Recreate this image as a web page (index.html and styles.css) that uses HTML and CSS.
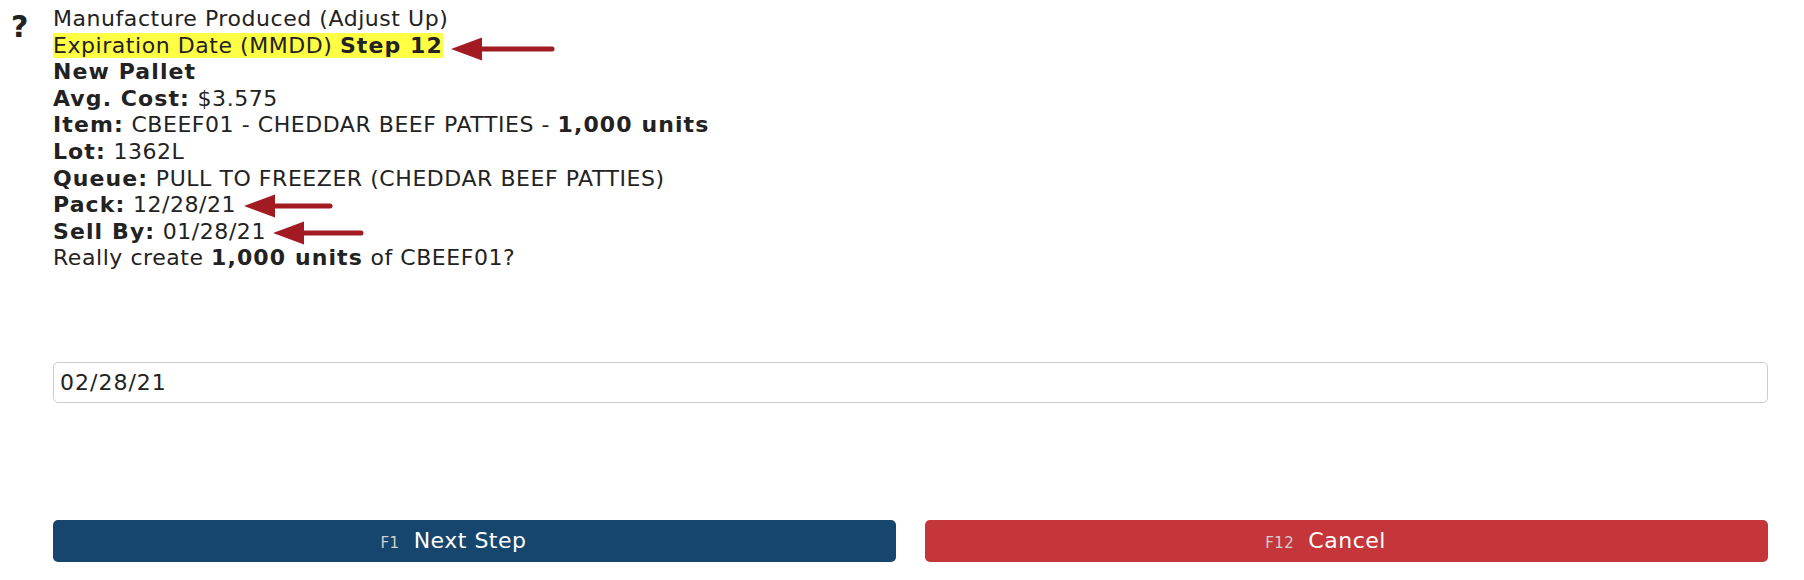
FILE: index.html
```html
<!DOCTYPE html>
<html>
<head>
    <title>Manufacture Produced - Step 12</title>
    <link rel="stylesheet" href="styles.css">
</head>
<body>
    <div class="prompt">
        <div class="prompt-icon">?</div>
        <div class="prompt-body">
            <div class="info">
                <div>Manufacture Produced (Adjust Up)</div>
                <div><span class="highlight">Expiration Date (MMDD) <b>Step 12</b></span></div>
                <div><b>New Pallet</b></div>
                <div><b>Avg. Cost:</b> $3.575</div>
                <div><b>Item:</b> CBEEF01 - CHEDDAR BEEF PATTIES - <b>1,000 units</b></div>
                <div><b>Lot:</b> 1362L</div>
                <div><b>Queue:</b> PULL TO FREEZER (CHEDDAR BEEF PATTIES)</div>
                <div><b>Pack:</b> 12/28/21</div>
                <div><b>Sell By:</b> 01/28/21</div>
                <div>Really create <b>1,000 units</b> of CBEEF01?</div>
            </div>

            <input type="text" class="answer" value="02/28/21">

            <div class="actions">
                <button class="btn btn-next"><span class="key">F1</span>Next Step</button>
                <button class="btn btn-cancel"><span class="key">F12</span>Cancel</button>
            </div>

            <!-- annotation arrows -->
            <svg class="arrow arrow-step" width="104" height="24" viewBox="0 0 104 24">
                <path d="M0 12 L31 0.5 L31 23.5 Z" />
                <line x1="29" y1="12" x2="101" y2="12" />
            </svg>
            <svg class="arrow arrow-pack" width="89" height="24" viewBox="0 0 89 24">
                <path d="M0 12 L31 0.5 L31 23.5 Z" />
                <line x1="29" y1="12" x2="86" y2="12" />
            </svg>
            <svg class="arrow arrow-sell" width="91" height="24" viewBox="0 0 91 24">
                <path d="M0 12 L31 0.5 L31 23.5 Z" />
                <line x1="29" y1="12" x2="88" y2="12" />
            </svg>
        </div>
    </div>
</body>
</html>
```

FILE: styles.css
```css
body {
    font-family: "DejaVu Sans", Verdana, sans-serif;
    background-color: #fff;
    color: #222;
    margin: 0;
    padding: 0;
}
.prompt {
    display: grid;
    grid-template-columns: 42px 1fr;
    padding: 6px 36px 0 11px;
}
.prompt-icon {
    font-size: 30px;
    font-weight: bold;
    line-height: 30px;
    margin-top: 6px;
    color: #222;
}
.prompt-body {
    position: relative;
}
.info {
    font-size: 22px;
    line-height: 26.6px;
    letter-spacing: 0.55px;
}
.info b {
    font-weight: bold;
    letter-spacing: 1.1px;
}
.highlight {
    background-color: #ffff44;
}
.answer {
    display: block;
    width: 100%;
    height: 41px;
    margin-top: 90px;
    padding: 0 6px;
    border: 1px solid #ccc;
    border-radius: 5px;
    box-sizing: border-box;
    font-family: "DejaVu Sans", Verdana, sans-serif;
    font-size: 22px;
    letter-spacing: 1px;
    color: #222;
    outline: none;
}
.actions {
    display: grid;
    grid-template-columns: 1fr 1fr;
    gap: 29px;
    margin-top: 117px;
}
.btn {
    height: 42px;
    border: none;
    border-radius: 5px;
    padding: 0 42px 0 0;
    color: white;
    font-family: "DejaVu Sans", Verdana, sans-serif;
    font-size: 22px;
    letter-spacing: 0.5px;
    cursor: pointer;
}
.btn-next {
    background-color: #16466e;
}
.btn-cancel {
    background-color: #c5363b;
}
.key {
    font-size: 15px;
    color: #d0d0d0;
    margin-right: 14px;
}
.arrow {
    position: absolute;
    fill: #a31b22;
    stroke: #a31b22;
}
.arrow line {
    stroke-width: 5;
    stroke-linecap: round;
}
.arrow path {
    stroke: none;
}
.arrow-step {
    left: 398px;
    top: 31px;
}
.arrow-pack {
    left: 191px;
    top: 188px;
}
.arrow-sell {
    left: 220px;
    top: 215px;
}
```
